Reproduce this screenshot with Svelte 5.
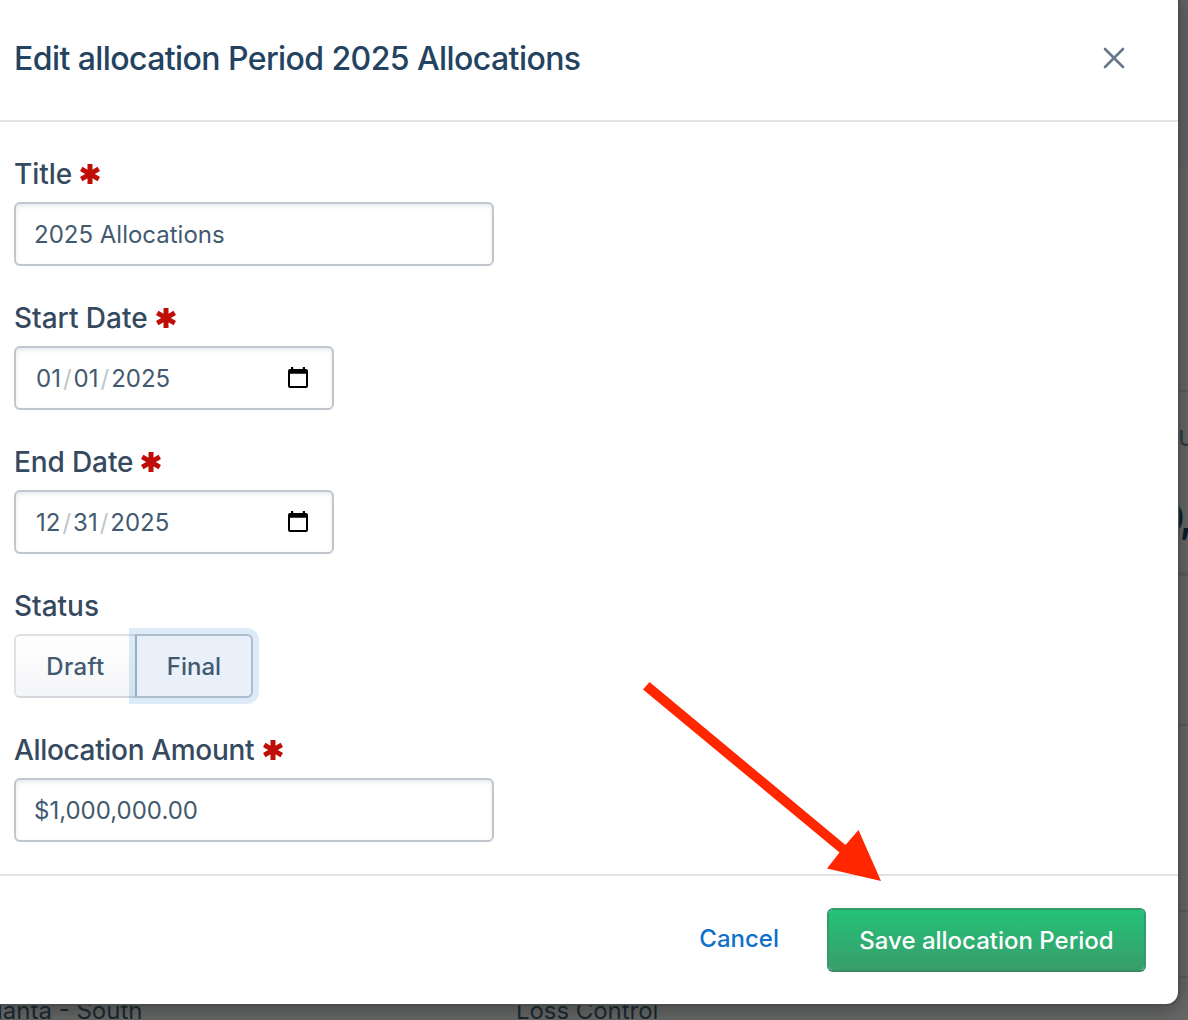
<script>
  let title = $state('2025 Allocations');
  let amount = $state('$1,000,000.00');
  let status = $state('Final');
  const dates = [
    { label: 'Start Date', parts: ['01', '01', '2025'] },
    { label: 'End Date', parts: ['12', '31', '2025'] }
  ];
</script>

{#snippet star()}
  <svg class="star" viewBox="0 0 20 20" aria-hidden="true">
    <path d="M10 0V20M1.2 4.9L18.8 15.1M18.8 4.9L1.2 15.1" />
  </svg>
{/snippet}

<main class="screen">
  <div class="page" aria-hidden="true">
    <div class="band"></div>
    <i class="rule r1"></i><i class="rule r2"></i><i class="rule r3"></i><i class="rule r4"></i><i class="rule r5"></i>
    <span class="behind letter">u</span>
    <span class="behind figure">0,</span>
    <span class="behind city">lanta - South</span>
    <span class="behind dept">Loss Control</span>
  </div>

  <section class="modal">
    <header>
      <h1>Edit allocation Period 2025 Allocations</h1>
      <button class="close" aria-label="Close">
        <svg viewBox="0 0 22 22"><path d="M2 2L20 20M20 2L2 20" /></svg>
      </button>
    </header>

    <div class="body">
      <div class="field">
        <div class="label"><span>Title</span>{@render star()}</div>
        <input class="box title" bind:value={title} />
      </div>
      {#each dates as d}
        <div class="field">
          <div class="label" class:end={d.label === 'End Date'}><span>{d.label}</span>{@render star()}</div>
          <div class="box date">
            <span class="digits">{d.parts[0]}<i>/</i>{d.parts[1]}<i>/</i>{d.parts[2]}</span>
            <svg class="calendar" viewBox="0 0 20 22"><path d="M3 0h2.2v2h9.6V0H17v2h1a2 2 0 0 1 2 2v15a2 2 0 0 1-2 2H2a2 2 0 0 1-2-2V4a2 2 0 0 1 2-2h1zM2 6.8V19h16V6.8z" /></svg>
          </div>
        </div>
      {/each}
      <div class="field">
        <div class="label"><span>Status</span></div>
        <div class="group">
          {#each ['Draft', 'Final'] as s}
            <button class:selected={status === s} onclick={() => (status = s)}>{s}</button>
          {/each}
        </div>
      </div>
      <div class="field">
        <div class="label tight"><span>Allocation Amount</span>{@render star()}</div>
        <input class="box amount" bind:value={amount} />
      </div>
    </div>

    <footer>
      <button class="cancel">Cancel</button>
      <button class="save">Save allocation Period</button>
    </footer>
  </section>

  <svg class="arrow" viewBox="0 0 240 202" aria-hidden="true">
    <path d="M9.5 2L205.5 165L218.5 150L241 201L187 188.5L199.5 172.5L3 9.5Z" />
  </svg>
</main>

<style>
  :global(body) { margin: 0; overflow: hidden; }
  .screen {
    position: relative; display: flow-root; width: 1188px; height: 1020px; overflow: hidden;
    font-family: Inter, "Liberation Sans", sans-serif; color: #33475b; background: #686968;
  }
  button, input { font: inherit; color: inherit; margin: 0; box-sizing: border-box; }
  .page { position: absolute; inset: 0; }
  .band { height: 166px; background: #646567; }
  .rule { position: absolute; right: 0; width: 14px; height: 2px; background: #5d5f5e; }
  .r1 { top: 390px; } .r2 { top: 572px; height: 4px; } .r3 { top: 724px; } .r4 { top: 910px; } .r5 { top: 976px; }
  .behind { position: absolute; white-space: nowrap; color: #192731; line-height: 30px; font-size: 24px; }
  .letter { left: 1178px; top: 421px; font-size: 28px; color: #303c45; }
  .figure { left: 1158px; top: 498px; font-size: 40px; line-height: 40px; font-weight: 600; letter-spacing: -3.5px; color: #091a2c; }
  .city { left: -3px; top: 996px; }
  .dept { left: 516px; top: 996px; letter-spacing: -.05px; }

  .modal {
    position: relative; display: flex; flex-direction: column; width: 1178px; height: 1014px; padding-top: 10px; margin-top: -10px; box-sizing: border-box;
    background: #fff; border-radius: 0 12px 12px 0;
    box-shadow: 0 0 0 1px #4e4f4f, 0 0 0 2px rgba(65,65,65,.35), 0 4px 24px rgba(20,25,22,.5);
  }
  header { box-sizing: border-box; height: 122px; display: flex; align-items: center; justify-content: space-between; padding: 0 53px 5px 14px; border-bottom: 2px solid #e3e4e5; }
  h1 { margin: 3px 0 0; font-size: 32px; line-height: 40px; font-weight: 550; color: #234361; letter-spacing: -.58px; white-space: nowrap; }
  .close { width: 22px; height: 22px; padding: 0; border: 0; background: none; }
  .close svg { display: block; width: 22px; height: 22px; fill: none; stroke: #66788a; stroke-width: 2.6; stroke-linecap: round; }
  .body { box-sizing: border-box; height: 752px; padding: 32px 14px 0; display: flex; flex-direction: column; gap: 32px; }
  .field { height: 112px; display: flex; flex-direction: column; align-items: flex-start; }
  .label { display: flex; align-items: center; gap: 8px; height: 48px; line-height: 40px; font-size: 28px; font-weight: 500; letter-spacing: -.02px; color: #35495f; margin-top: -4px; margin-bottom: 4px; }
  .end { letter-spacing: -.12px; }
  .tight { gap: 9px; letter-spacing: -.34px; }
  .star { width: 20px; height: 20px; fill: none; stroke: #bf0e08; stroke-width: 5; }
  .box {
    box-sizing: border-box; width: 480px; height: 64px; flex: none; padding: 1px 18px 0; border: 2px solid #c0c6cd; border-radius: 6px;
    background: #fff; box-shadow: inset 0 2px 4px rgba(67,90,111,.14); color: #425a70; font-size: 24px; outline: none;
  }
  .date { width: 320px; display: flex; align-items: center; justify-content: space-between; padding: 1px 24px 0 20px; }
  .date i { color: #c0c5ca; font-style: normal; padding: 0 2px; }
  .calendar { width: 20px; height: 22px; margin-bottom: 2px; }
  .group { display: flex; }
  .group button {
    height: 64px; width: 121px; border: 2px solid #dfe2e5; border-bottom-color: #d3d7db; border-right: 0; border-radius: 6px 0 0 6px;
    background: linear-gradient(#fff, #f4f5f7); color: #425a70; font-size: 24px; font-weight: 500; padding: 1px 0 0; letter-spacing: .35px;
  }
  .group button.selected { width: 118px; border: 2px solid #aebdcb; border-left-color: #9baebf; border-radius: 0 6px 6px 0; background: #e9f0fa; box-shadow: 0 0 0 6px rgba(16,112,202,.14); letter-spacing: 0; }
  footer { box-sizing: border-box; height: 130px; display: flex; justify-content: flex-end; align-items: center; gap: 48px; padding: 0 32px 0 0; border-top: 2px solid #dfe2e6; }
  footer button { font-size: 24px; font-weight: 500; padding: 0; }
  .cancel { border: 0; background: none; color: #1070ca; height: 64px; padding-bottom: 3px; }
  .save { width: 319px; height: 64px; border: 2px solid #359b6b; border-bottom-color: #388b68; border-radius: 6px; padding-top: 1px; color: #fff; background: linear-gradient(#23c277, #399d6c) padding-box; }
  .arrow { position: absolute; left: 640px; top: 680px; width: 240px; height: 202px; overflow: visible; fill: #ff2600; }
</style>
